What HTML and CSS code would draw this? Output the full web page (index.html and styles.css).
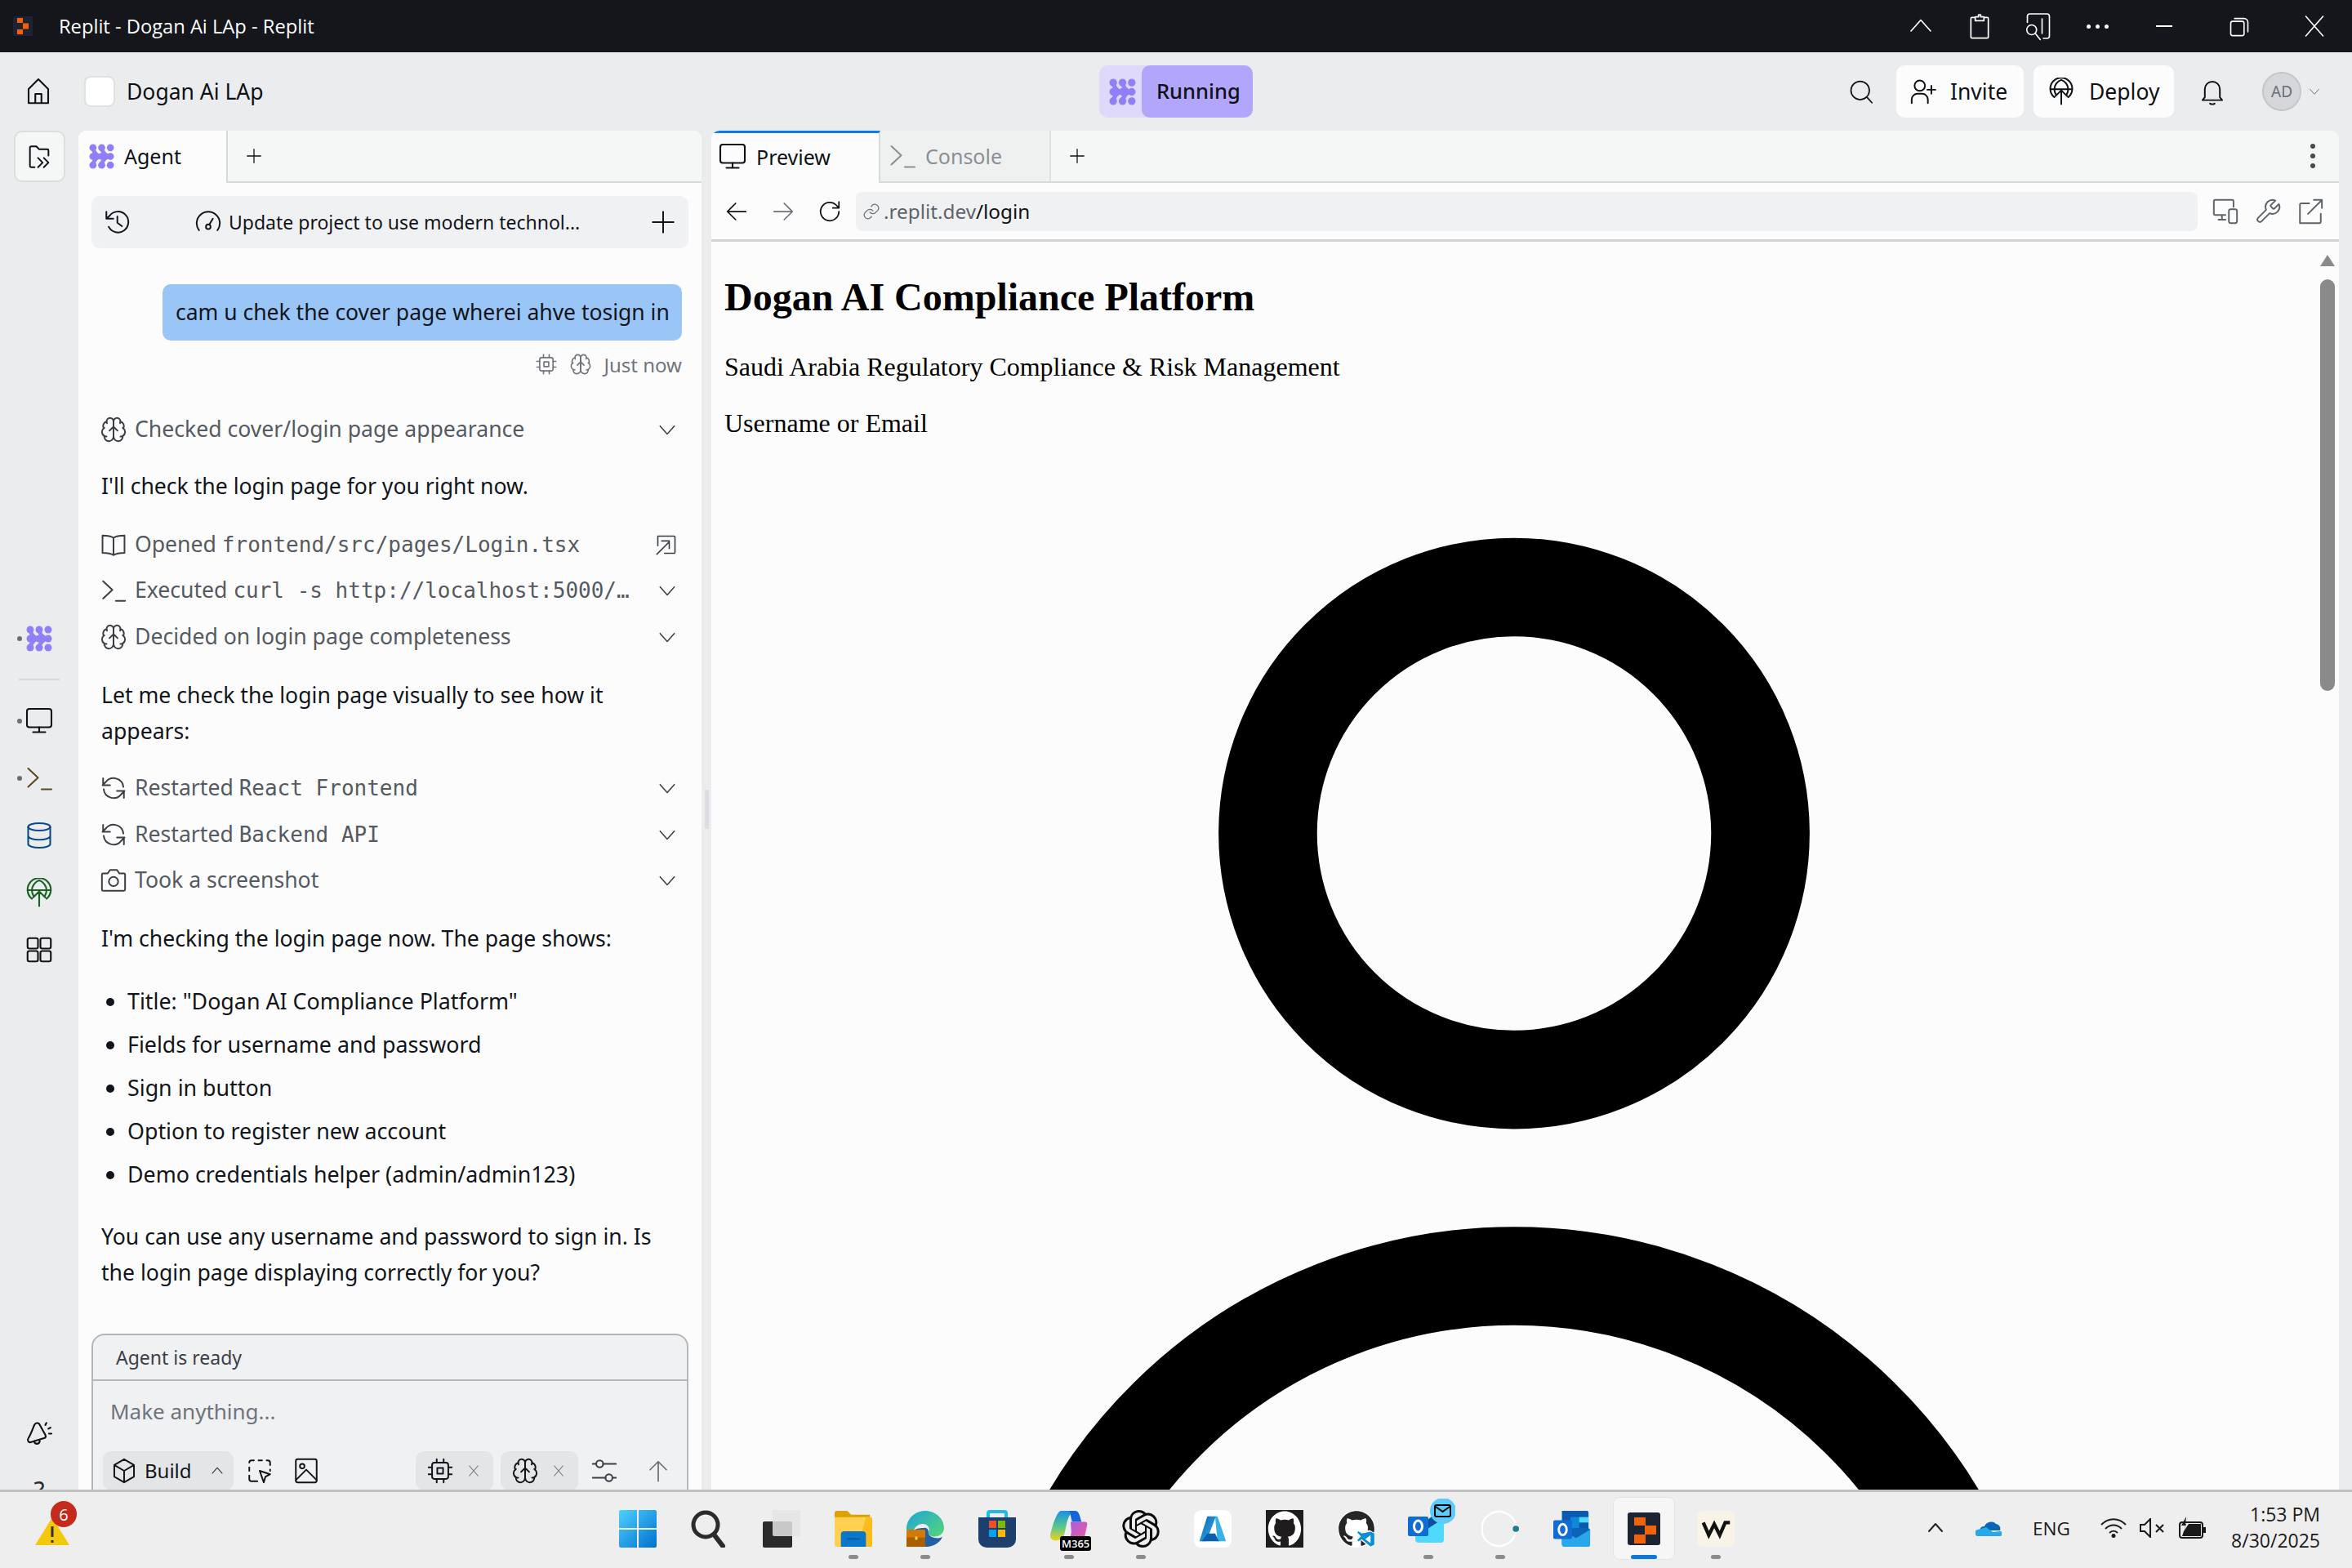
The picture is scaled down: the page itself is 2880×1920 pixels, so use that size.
FILE: index.html
```html
<!DOCTYPE html>
<html lang="en">
<head>
<meta charset="utf-8">
<title>Replit - Dogan Ai LAp - Replit</title>
<link rel="stylesheet" href="styles.css">
</head>
<body>
<svg class="sprite" aria-hidden="true">
<defs>
<linearGradient id="win" x1="0" y1="0" x2="1" y2="1"><stop offset="0" stop-color="#4fd0ff"/><stop offset="1" stop-color="#0070cc"/></linearGradient>
<linearGradient id="edge" x1="0" y1="0" x2="1" y2="1"><stop offset="0" stop-color="#1fa5d8"/><stop offset="1" stop-color="#5bdc6a"/></linearGradient>
<linearGradient id="cop" x1="0" y1="0" x2="0" y2="1"><stop offset="0" stop-color="#1a8fe8"/><stop offset=".55" stop-color="#58c98a"/><stop offset="1" stop-color="#f0d020"/></linearGradient>
<linearGradient id="cop2" x1="0" y1="0" x2="1" y2="1"><stop offset="0" stop-color="#a45be0"/><stop offset="1" stop-color="#f0609a"/></linearGradient>
<linearGradient id="az" x1="0" y1="0" x2="1" y2="1"><stop offset="0" stop-color="#0c5fb0"/><stop offset="1" stop-color="#37b4ec"/></linearGradient>
<symbol id="agent" viewBox="0 0 32 32"><g fill="#8f7ffb"><circle cx="5" cy="5" r="4.500"/><circle cx="16" cy="5" r="4.500"/><circle cx="27" cy="5" r="4.500"/><circle cx="5" cy="16" r="4.500"/><circle cx="16" cy="16" r="4.500"/><circle cx="27" cy="16" r="4.500"/><circle cx="5" cy="27" r="4.500"/><circle cx="16" cy="27" r="4.500"/><circle cx="27" cy="27" r="4.500"/></g><path fill="none" stroke="#8f7ffb" stroke-width="5" d="M5 5c1 7 6 11 11 11C11 16 6 20 5 27M16 5c1 7 6 11 11 11-5 0-10 4-11 11"/></symbol>
<symbol id="home" viewBox="0 0 24 24"><path d="M4 21.500V10l8-8 8 8v11.500zM9.500 21.500V14h5v7.500"/></symbol>
<symbol id="files" viewBox="0 0 24 24"><path d="M8 21H5a1 1 0 0 1-1-1V4a1 1 0 0 1 1-1h4.500L12 5.500h7a1 1 0 0 1 1 1V11M11 13l4 4-4 4M16 13l4 4-4 4"/></symbol>
<symbol id="plus" viewBox="0 0 24 24"><path d="M12 3v18M3 12h18"/></symbol>
<symbol id="history" viewBox="0 0 24 24"><path d="M5 16a9 9 0 1 0 .8-9.500L3 9M3 3v6h6M12.500 7v5.500l4 3"/></symbol>
<symbol id="gauge" viewBox="0 0 24 24"><path d="M4 19a10 10 0 1 1 16 0M13 14l3-5"/><circle cx="12" cy="16" r="2"/></symbol>
<symbol id="chip" viewBox="0 0 24 24"><rect x="5" y="5" width="14" height="14" rx="2"/><rect x="9.500" y="9.500" width="5" height="5"/><path d="M9 2v3M15 2v3M9 19v3M15 19v3M2 9h3M2 15h3M19 9h3M19 15h3"/></symbol>
<symbol id="brain" viewBox="0 0 24 24"><path d="M12 5a3 3 0 1 0-5.997.125 4 4 0 0 0-2.526 5.770 4 4 0 0 0 .556 6.588A4 4 0 1 0 12 18Z"/><path d="M12 5a3 3 0 1 1 5.997.125 4 4 0 0 1 2.526 5.770 4 4 0 0 1-.556 6.588A4 4 0 1 1 12 18Z"/><path d="M12 5v13M8.500 13 12 9.500l3.500 3.500M17.599 6.500a3 3 0 0 0 .399-1.375M6.003 5.125A3 3 0 0 0 6.401 6.500M3.477 10.896a4 4 0 0 1 .585-.396M19.938 10.500a4 4 0 0 1 .585.396M6 18a4 4 0 0 1-1.967-.516M19.967 17.484A4 4 0 0 1 18 18"/></symbol>
<symbol id="book" viewBox="0 0 24 24"><path d="M12 6C10 4.500 7 4 2.500 4v15C7 19 10 19.500 12 21c2-1.500 5-2 9.500-2V4C17 4 14 4.500 12 6zM12 6v15"/></symbol>
<symbol id="term" viewBox="0 0 24 24"><path d="M3 4l8 7.500L3 19M14 21h8"/></symbol>
<symbol id="down" viewBox="0 0 24 24"><path d="M4 8l8 9 8-9"/></symbol>
<symbol id="up" viewBox="0 0 24 24"><path d="M4 16l8-9 8 9"/></symbol>
<symbol id="openfile" viewBox="0 0 24 24"><path d="M3 3h17a1 1 0 0 1 1 1v16a1 1 0 0 1-1 1H10M3 3v10M2 22L15 9M7 8h8v8"/></symbol>
<symbol id="refresh" viewBox="0 0 24 24"><path d="M20.500 11a8.500 8.500 0 0 0-15-4.500L2.500 9.500M3 3.500v6h6M3.500 13a8.500 8.500 0 0 0 15 4.500l3-3M21 20.500v-6h-6"/></symbol>
<symbol id="camera" viewBox="0 0 24 24"><path d="M3 6h4l2-3h6l2 3h4a1 1 0 0 1 1 1v13a1 1 0 0 1-1 1H3a1 1 0 0 1-1-1V7a1 1 0 0 1 1-1z"/><circle cx="12" cy="13" r="4"/></symbol>
<symbol id="monitor" viewBox="0 0 24 24"><rect x="2" y="2" width="20" height="15" rx="2"/><path d="M12 17v4M7 21h10"/></symbol>
<symbol id="db" viewBox="0 0 24 24"><ellipse cx="12" cy="5" rx="9" ry="3"/><path d="M3 5v14c0 1.700 4 3 9 3s9-1.300 9-3V5M3 12.500c0 1.700 4 3 9 3s9-1.300 9-3"/></symbol>
<symbol id="deploy" viewBox="0 0 24 24"><path d="M6 17a9.500 9.500 0 1 1 12 0M2.500 10h19M7.500 15C6.500 13 6 11.500 6 10c0-3 2.500-7 6-8 3.500 1 6 5 6 8 0 1.500-.5 3-1.500 5M12 23V11M7 16l5-5 5 5"/></symbol>
<symbol id="grid" viewBox="0 0 24 24"><rect x="2.500" y="2.500" width="8.500" height="8.500" rx="1.500"/><rect x="13" y="2.500" width="8.500" height="8.500" rx="1.500"/><rect x="2.500" y="13" width="8.500" height="8.500" rx="1.500"/><rect x="13" y="13" width="8.500" height="8.500" rx="1.500"/></symbol>
<symbol id="announce" viewBox="0 0 24 24"><path d="M3 17c2-3 3-6 5-11 1-2 3-2 4-1l5 9c.5 1 .5 2-.5 2.500L5 20c-1.500.5-3-1.500-2-3zM8 19c0 3 4 3 4.500 0"/><path d="M17 6l1-2M19.500 9l2-1M20 13h2" stroke-dasharray="2 1"/></symbol>
<symbol id="bell" viewBox="0 0 24 24"><path d="M5.500 17V10a6.500 6.500 0 0 1 13 0v7l2 2.500h-17zM10 22.500c1 .7 3 .7 4 0"/></symbol>
<symbol id="search" viewBox="0 0 24 24"><circle cx="11" cy="11" r="9"/><path d="M17.500 17.500 22.500 23"/></symbol>
<symbol id="invite" viewBox="0 0 24 24"><circle cx="9" cy="7" r="4.500"/><path d="M2 22v-3a5 5 0 0 1 5-5h4a5 5 0 0 1 5 5v3M19 7v7M15.500 10.500h7"/></symbol>
<symbol id="left" viewBox="0 0 24 24"><path d="M21 12H3M11 4l-8 8 8 8"/></symbol>
<symbol id="right" viewBox="0 0 24 24"><path d="M3 12h18M13 4l8 8-8 8"/></symbol>
<symbol id="reload" viewBox="0 0 24 24"><path d="M21 12a9 9 0 1 1-2.700-6.400L21 8.500M21 2.500v6h-6"/></symbol>
<symbol id="link" viewBox="0 0 24 24"><path d="M10 13a5 5 0 0 0 7.500.5l3-3a5 5 0 0 0-7-7l-1.700 1.700M14 11a5 5 0 0 0-7.500-.5l-3 3a5 5 0 0 0 7 7l1.700-1.700"/></symbol>
<symbol id="devices" viewBox="0 0 24 24"><path d="M12 15H3a1 1 0 0 1-1-1V3a1 1 0 0 1 1-1h15a1 1 0 0 1 1 1v5M9 15v4M6 19h6"/><rect x="15" y="10" width="7" height="12" rx="1.500"/></symbol>
<symbol id="wrench" viewBox="0 0 24 24"><path d="M14.700 6.300a1 1 0 0 0 0 1.400l1.600 1.600a1 1 0 0 0 1.400 0l3.770-3.770a6 6 0 0 1-7.940 7.940l-6.910 6.910a2.120 2.120 0 0 1-3-3l6.910-6.910a6 6 0 0 1 7.940-7.940l-3.760 3.760z"/></symbol>
<symbol id="extern" viewBox="0 0 24 24"><path d="M11 5H4a1 1 0 0 0-1 1v16h17a1 1 0 0 0 1-1v-7M15 2h7v7M22 2 10 14"/></symbol>
<symbol id="cube" viewBox="0 0 24 24"><path d="M12 2l8.500 5v10L12 22l-8.500-5V7zM3.500 7l8.500 5 8.500-5M12 12v10"/></symbol>
<symbol id="select" viewBox="0 0 24 24"><path d="M10 21H5a2 2 0 0 1-2-2v-3M3 12V9M3 5a2 2 0 0 1 2-2h2M11 3h3M18 3h1a2 2 0 0 1 2 2v2M21 11v1"/><path d="M12 12l9 3-4 2-1.500 5z"/></symbol>
<symbol id="image" viewBox="0 0 24 24"><rect x="3" y="2" width="18" height="20" rx="1.500"/><circle cx="8.500" cy="8" r="2"/><path d="M3 20l9-9 9 9"/></symbol>
<symbol id="sliders" viewBox="0 0 24 24"><circle cx="8" cy="6" r="3"/><circle cx="16" cy="18" r="3"/><path d="M11 6h11M2 18h11M19 18h3M2 6h3"/></symbol>
<symbol id="arrowup" viewBox="0 0 24 24"><path d="M12 22V3M4 11l8-8 8 8"/></symbol>
<symbol id="x" viewBox="0 0 24 24"><path d="M5 4l14 16M19 4 5 20"/></symbol>
<symbol id="clip" viewBox="0 0 24 24"><path d="M8 4H5a1 1 0 0 0-1 1v17a1 1 0 0 0 1 1h14a1 1 0 0 0 1-1V5a1 1 0 0 0-1-1h-3M8 7V3.500h3V1.500h2v2h3V7z"/></symbol>
<symbol id="snip" viewBox="0 0 24 24"><path d="M3 9V4a2 2 0 0 1 2-2h14a2 2 0 0 1 2 2v16a2 2 0 0 1-2 2h-3M15 6v12"/><circle cx="6.500" cy="15" r="4"/><path d="M9.500 18l4 5"/></symbol>
<symbol id="restore" viewBox="0 0 24 24"><rect x="3" y="7" width="14" height="15" rx="2"/><path d="M7 4h10a4 4 0 0 1 4 4v10"/></symbol>
</defs>
</svg>

<header class="titlebar">
  <svg class="replit-mini" viewBox="0 0 24 24"><rect width="24" height="24" rx="2" fill="#1c2333"/><path fill="#f26207" d="M5 2h7v6H5zM12 8.500h7v7h-7zM5 16h7v6H5z"/></svg>
  <span class="wintitle">Replit - Dogan Ai LAp - Replit</span>
  <div class="capgroup">
    <span class="capslot"><svg class="ic ic-cap-l"><use href="#up"/></svg></span>
    <span class="capslot"><svg class="ic ic-cap-m"><use href="#clip"/></svg></span>
    <span class="capslot"><svg class="ic ic-cap-l"><use href="#snip"/></svg></span>
    <span class="capslot capdots"><span></span><span></span><span></span></span>
    <span class="capbtn"><span class="minbar"></span></span>
    <span class="capbtn"><svg class="ic ic-cap-r"><use href="#restore"/></svg></span>
    <span class="capbtn"><svg class="ic ic-cap-l"><use href="#x"/></svg></span>
  </div>
</header>

<div class="topbar">
  <div class="top-left">
    <svg class="ic ic-home"><use href="#home"/></svg>
    <span class="project-tile"></span>
    <span class="project-name">Dogan Ai LAp</span>
  </div>
  <div class="running">
    <span class="running-logo"><svg class="logo-md"><use href="#agent"/></svg></span>
    <span class="running-text">Running</span>
  </div>
  <div class="top-right">
    <svg class="ic ic-search"><use href="#search"/></svg>
    <button class="topbtn topbtn-invite"><svg class="ic ic-md"><use href="#invite"/></svg>Invite</button>
    <button class="topbtn topbtn-deploy"><svg class="ic ic-md"><use href="#deploy"/></svg>Deploy</button>
    <svg class="ic ic-bell"><use href="#bell"/></svg>
    <span class="avatar">AD</span>
    <svg class="ic ic-avchev"><use href="#down"/></svg>
  </div>
</div>

<main class="workspace">
  <nav class="rail">
    <span class="rail-file"><svg class="ic ic-md"><use href="#files"/></svg></span>
    <div class="rail-mid">
      <span class="rail-item has-dot"><svg class="logo-lg"><use href="#agent"/></svg></span>
      <span class="rail-sep"></span>
      <span class="rail-item has-dot"><svg class="ic ic-rail"><use href="#monitor"/></svg></span>
      <span class="rail-item has-dot c-term"><svg class="ic ic-rail"><use href="#term"/></svg></span>
      <span class="rail-item c-db"><svg class="ic ic-rail"><use href="#db"/></svg></span>
      <span class="rail-item c-deploy"><svg class="ic ic-rail"><use href="#deploy"/></svg></span>
      <span class="rail-item"><svg class="ic ic-rail"><use href="#grid"/></svg></span>
    </div>
    <div class="rail-bottom">
      <svg class="ic ic-rail"><use href="#announce"/></svg>
      <span class="rail-help">?</span>
    </div>
  </nav>

  <section class="agent-pane">
    <div class="tabs">
      <div class="tab tab-agent"><svg class="logo-sm"><use href="#agent"/></svg><span>Agent</span></div>
      <span class="tab-plus tab-plus-a"><svg class="ic ic-sm"><use href="#plus"/></svg></span>
    </div>
    <div class="chat">
      <div class="session">
        <svg class="ic ic-md"><use href="#history"/></svg>
        <div class="session-title"><svg class="ic ic-md"><use href="#gauge"/></svg><span>Update project to use modern technol...</span></div>
        <svg class="ic ic-md"><use href="#plus"/></svg>
      </div>
      <div class="bubble">cam u chek the cover page wherei ahve tosign in</div>
      <div class="meta"><svg class="ic ic-meta"><use href="#chip"/></svg><svg class="ic ic-meta"><use href="#brain"/></svg><span>Just now</span></div>

      <div class="step step-first"><svg class="ic ic-step"><use href="#brain"/></svg><span class="step-text">Checked cover/login page appearance</span><svg class="ic ic-chev"><use href="#down"/></svg></div>
      <p class="msg msg-1">I'll check the login page for you right now.</p>
      <div class="step step-gap step-gap-a"><svg class="ic ic-step"><use href="#book"/></svg><span class="step-text">Opened <code>frontend/src/pages/Login.tsx</code></span><svg class="ic ic-open"><use href="#openfile"/></svg></div>
      <div class="step"><svg class="ic ic-step"><use href="#term"/></svg><span class="step-text">Executed <code>curl -s http://localhost:5000/…</code></span><svg class="ic ic-chev"><use href="#down"/></svg></div>
      <div class="step"><svg class="ic ic-step"><use href="#brain"/></svg><span class="step-text">Decided on login page completeness</span><svg class="ic ic-chev"><use href="#down"/></svg></div>
      <p class="msg msg-2">Let me check the login page visually to see how it appears:</p>
      <div class="step step-gap"><svg class="ic ic-step"><use href="#refresh"/></svg><span class="step-text">Restarted <code>React Frontend</code></span><svg class="ic ic-chev"><use href="#down"/></svg></div>
      <div class="step"><svg class="ic ic-step"><use href="#refresh"/></svg><span class="step-text">Restarted <code>Backend API</code></span><svg class="ic ic-chev"><use href="#down"/></svg></div>
      <div class="step"><svg class="ic ic-step"><use href="#camera"/></svg><span class="step-text">Took a screenshot</span><svg class="ic ic-chev"><use href="#down"/></svg></div>
      <p class="msg msg-3">I'm checking the login page now. The page shows:</p>
      <ul class="bullets">
        <li>Title: "Dogan AI Compliance Platform"</li>
        <li>Fields for username and password</li>
        <li>Sign in button</li>
        <li>Option to register new account</li>
        <li>Demo credentials helper (admin/admin123)</li>
      </ul>
      <p class="msg msg-4">You can use any username and password to sign in. Is the login page displaying correctly for you?</p>

      <div class="composer">
        <div class="composer-status">Agent is ready</div>
        <div class="composer-input">Make anything...</div>
        <div class="composer-tools">
          <span class="pill pill-build"><svg class="ic ic-md"><use href="#cube"/></svg><span>Build</span><svg class="ic ic-xs"><use href="#up"/></svg></span>
          <svg class="ic ic-tool ic-select"><use href="#select"/></svg>
          <svg class="ic ic-tool ic-image"><use href="#image"/></svg>
          <span class="tools-spacer"></span>
          <span class="pill pill-chip"><svg class="ic ic-md"><use href="#chip"/></svg><svg class="ic ic-xg"><use href="#x"/></svg></span>
          <span class="pill pill-chip"><svg class="ic ic-md"><use href="#brain"/></svg><svg class="ic ic-xg"><use href="#x"/></svg></span>
          <svg class="ic ic-tool ic-sl"><use href="#sliders"/></svg>
          <svg class="ic ic-tool ic-send"><use href="#arrowup"/></svg>
        </div>
      </div>
    </div>
  </section>

  <div class="resizer"><span class="resizer-grip"></span></div>

  <section class="preview-pane">
    <div class="tabs">
      <div class="tab tab-preview"><svg class="ic ic-tab"><use href="#monitor"/></svg><span>Preview</span></div>
      <div class="tab tab-console"><svg class="ic ic-tab"><use href="#term"/></svg><span>Console</span></div>
      <span class="tab-plus"><svg class="ic ic-sm"><use href="#plus"/></svg></span>
      <span class="tab-menu"><span></span><span></span><span></span></span>
    </div>
    <div class="urlbar">
      <svg class="ic ic-nav"><use href="#left"/></svg>
      <svg class="ic ic-nav ic-faint"><use href="#right"/></svg>
      <svg class="ic ic-nav"><use href="#reload"/></svg>
      <div class="urlfield"><svg class="ic ic-link"><use href="#link"/></svg><span class="url-host">.replit.dev</span><span class="url-path">/login</span></div>
      <svg class="ic ic-tb"><use href="#devices"/></svg>
      <svg class="ic ic-tb"><use href="#wrench"/></svg>
      <svg class="ic ic-tb"><use href="#extern"/></svg>
    </div>
    <div class="webview">
      <h1 class="web-h1">Dogan AI Compliance Platform</h1>
      <p class="web-p">Saudi Arabia Regulatory Compliance &amp; Risk Management</p>
      <p class="web-p web-label">Username or Email</p>
      <svg class="web-user" viewBox="0 0 24 24"><path d="M15.750 6a3.750 3.750 0 1 1-7.500 0 3.750 3.750 0 0 1 7.500 0ZM4.501 20.118a7.500 7.500 0 0 1 14.998 0A17.933 17.933 0 0 1 12 21.750c-2.676 0-5.216-.584-7.499-1.632Z"/></svg>
      <div class="web-scroll"><span class="web-scroll-up"></span><span class="web-scroll-thumb"></span></div>
    </div>
  </section>
</main>

<footer class="taskbar">
  <div class="tb-left">
    <span class="warn">
      <svg class="warn-tri" viewBox="0 0 42 36"><path fill="#f4c80c" d="M21 1 42 35H0z"/><path d="M21 12v13M21 29v3" stroke="#333" stroke-width="3"/></svg>
      <span class="warn-badge">6</span>
    </span>
  </div>
  <div class="tb-apps">
    <span class="app"><svg class="app-i" viewBox="0 0 46 46"><path fill="url(#win)" d="M0 2a2 2 0 0 1 2-2h20v22H0zM24 0h20a2 2 0 0 1 2 2v20H24zM0 24h22v22H2a2 2 0 0 1-2-2zM24 24h22v20a2 2 0 0 1-2 2H24z"/></svg></span>
    <span class="app"><svg class="app-i" viewBox="0 0 46 46"><circle cx="18" cy="18" r="15" fill="none" stroke="#2b2b2b" stroke-width="5"/><path d="M29 31l10 13" stroke="#2b2b2b" stroke-width="6" stroke-linecap="round"/></svg></span>
    <span class="app"><svg class="app-i" viewBox="0 0 46 46"><rect x="0" y="14" width="36" height="32" rx="2" fill="#2a2a2a"/><rect x="12" y="0" width="35" height="32" rx="2" fill="#e4e4e4" fill-opacity=".85"/></svg></span>
    <span class="app has-run"><svg class="app-i" viewBox="0 0 48 46"><path fill="#dba200" d="M0 3a3 3 0 0 1 3-3h13l5 5h24v10H0z"/><path fill="#ffd052" d="M0 8h45a3 3 0 0 1 3 3v32a3 3 0 0 1-3 3H3a3 3 0 0 1-3-3z"/><path fill="#fbbd1a" d="M40 8h5a3 3 0 0 1 3 3v32a3 3 0 0 1-3 3H30z"/><path fill="#0a78c9" d="M8 46V30a4 4 0 0 1 4-4h24a4 4 0 0 1 4 4v16z"/><path d="M16 36h16" stroke="#075a9a" stroke-width="2"/></svg></span>
    <span class="app has-run"><svg class="app-i" viewBox="0 0 48 46"><path fill="url(#edge)" d="M24 0c13 0 24 10 24 22 0 6-5 11-12 11-6 0-8-3-8-5 0-1 1-2 1-4 0-5-5-8-10-7-7 1-11 7-11 14C8 33 10 39 12 42 5 38 0 31 0 23 0 10 11 0 24 0z"/><path fill="#0b4f9e" d="M22 22c4-1 6 2 6 4-1 7 6 9 12 9 3 0 5-1 6-2-3 8-12 13-20 13H0c-1-7 0-24 22-24z" opacity=".9"/><rect x="0" y="24" width="24" height="22" rx="2" fill="#d17a05"/><rect x="0" y="34" width="24" height="12" fill="#a85f00"/><rect x="11" y="33" width="3" height="4" fill="#ffd44d"/></svg></span>
    <span class="app"><svg class="app-i" viewBox="0 0 46 46"><path d="M12 10V4a2 2 0 0 1 2-2h18a2 2 0 0 1 2 2v6" fill="none" stroke="#22b8ee" stroke-width="4"/><path fill="#1c3f6e" d="M0 9h46v27a10 10 0 0 1-10 10H10A10 10 0 0 1 0 36z"/><path fill="#f25022" d="M13 13h9v9h-9z"/><path fill="#7fba00" d="M24 13h9v9h-9z"/><path fill="#00a4ef" d="M13 24h9v9h-9z"/><path fill="#ffb900" d="M24 24h9v9h-9z"/></svg></span>
    <span class="app has-run"><svg class="app-i" viewBox="0 0 48 46"><path fill="url(#cop)" d="M14 0h18c-6 2-9 8-11 16l-3 14c-2 5-5 8-11 8-5 0-7-3-7-7C2 22 8 0 14 0z"/><path fill="#1565d8" d="M24 0h8c5 0 6 8 8 14H28c-2-6-2-12-4-14z"/><path fill="url(#cop2)" d="M26 14h18c3 0 4 2 3 5l-3 14c-2 6-8 8-14 8h-10c5-2 6-8 7-14z"/></svg><span class="m365">M365</span></span>
    <span class="app has-run"><svg class="app-i" viewBox="0 0 24 24"><path fill="#0a0a0a" d="M22.2819 9.8211a5.9847 5.9847 0 0 0-.5157-4.9108 6.0462 6.0462 0 0 0-6.5098-2.9A6.0651 6.0651 0 0 0 4.9807 4.1818a5.9847 5.9847 0 0 0-3.9977 2.9 6.0462 6.0462 0 0 0 .7427 7.0966 5.98 5.98 0 0 0 .511 4.9107 6.051 6.051 0 0 0 6.5146 2.9001A5.9847 5.9847 0 0 0 13.2599 24a6.0557 6.0557 0 0 0 5.7718-4.2058 5.9894 5.9894 0 0 0 3.9977-2.9001 6.0557 6.0557 0 0 0-.7475-7.0729zm-9.022 12.6081a4.4755 4.4755 0 0 1-2.8764-1.0408l.1419-.0804 4.7783-2.7582a.7948.7948 0 0 0 .3927-.6813v-6.7369l2.02 1.1686a.071.071 0 0 1 .038.052v5.5826a4.504 4.504 0 0 1-4.4945 4.4944zm-9.6607-4.1254a4.4708 4.4708 0 0 1-.5346-3.0137l.142.0852 4.783 2.7582a.7712.7712 0 0 0 .7806 0l5.8428-3.3685v2.3324a.0804.0804 0 0 1-.0332.0615L9.74 19.9502a4.4992 4.4992 0 0 1-6.1408-1.6464zM2.3408 7.8956a4.485 4.485 0 0 1 2.3655-1.9728V11.6a.7664.7664 0 0 0 .3879.6765l5.8144 3.3543-2.0201 1.1685a.0757.0757 0 0 1-.071 0l-4.8303-2.7865A4.504 4.504 0 0 1 2.3408 7.872zm16.5963 3.8558L13.1038 8.364 15.1192 7.2a.0757.0757 0 0 1 .071 0l4.8303 2.7913a4.4944 4.4944 0 0 1-.6765 8.1042v-5.6772a.79.79 0 0 0-.407-.667zm2.0107-3.0231l-.142-.0852-4.7735-2.7818a.7759.7759 0 0 0-.7854 0L9.409 9.2297V6.8974a.0662.0662 0 0 1 .0284-.0615l4.8303-2.7866a4.4992 4.4992 0 0 1 6.6802 4.66zM8.3065 12.863l-2.02-1.1638a.0804.0804 0 0 1-.038-.0567V6.0742a4.4992 4.4992 0 0 1 7.3757-3.4537l-.142.0805L8.704 5.459a.7948.7948 0 0 0-.3927.6813zm1.0976-2.3654l2.602-1.4998 2.6069 1.4998v2.9994l-2.5974 1.4997-2.6067-1.4997Z"/></svg></span>
    <span class="app"><svg class="app-i" viewBox="0 0 48 48"><rect width="48" height="48" rx="9" fill="#fff"/><path fill="url(#az)" d="M17 8h11L16 40H7z"/><path fill="#39b0ea" d="M27 8h3l11 32H30z"/><path fill="#0a5fb0" d="M17 30h10l5 10H10z"/></svg></span>
    <span class="app"><svg class="app-i" viewBox="0 0 16 16"><rect width="16" height="16" fill="#1e1c1c"/><path transform="translate(1 .5) scale(.875 .94)" fill="#fff" d="M8 0C3.580 0 0 3.580 0 8c0 3.540 2.290 6.530 5.470 7.590.4.070.55-.17.55-.38 0-.19-.01-.82-.01-1.490-2.010.37-2.530-.49-2.690-.94-.09-.23-.48-.94-.82-1.130-.28-.15-.68-.52-.01-.53.63-.01 1.080.58 1.230.82.72 1.210 1.870.87 2.330.66.07-.52.28-.87.51-1.070-1.780-.2-3.640-.89-3.640-3.950 0-.87.31-1.590.82-2.150-.08-.2-.36-1.020.08-2.120 0 0 .67-.21 2.200.82.64-.18 1.320-.27 2-.27.68 0 1.360.09 2 .27 1.530-1.040 2.200-.82 2.200-.82.44 1.100.16 1.920.08 2.120.51.56.82 1.270.82 2.150 0 3.070-1.870 3.750-3.650 3.950.29.25.54.73.54 1.480 0 1.070-.01 1.930-.01 2.200 0 .21.15.46.55.38A8.013 8.013 0 0016 8c0-4.420-3.580-8-8-8z"/></svg></span>
    <span class="app"><svg class="app-i" viewBox="0 0 16 16"><circle cx="8" cy="8" r="8" fill="#fff"/><path transform="translate(.4 .4) scale(.95)" fill="#262626" d="M8 0C3.580 0 0 3.580 0 8c0 3.540 2.290 6.530 5.470 7.590.4.070.55-.17.55-.38 0-.19-.01-.82-.01-1.490-2.010.37-2.530-.49-2.690-.94-.09-.23-.48-.94-.82-1.130-.28-.15-.68-.52-.01-.53.63-.01 1.080.58 1.230.82.72 1.210 1.870.87 2.330.66.07-.52.28-.87.51-1.070-1.780-.2-3.640-.89-3.640-3.950 0-.87.31-1.590.82-2.150-.08-.2-.36-1.020.08-2.120 0 0 .67-.21 2.200.82.64-.18 1.320-.27 2-.27.68 0 1.360.09 2 .27 1.530-1.040 2.200-.82 2.200-.82.44 1.100.16 1.920.08 2.120.51.56.82 1.270.82 2.150 0 3.070-1.870 3.750-3.650 3.950.29.25.54.73.54 1.480 0 1.070-.01 1.930-.01 2.200 0 .21.15.46.55.38A8.013 8.013 0 0016 8c0-4.420-3.580-8-8-8z"/><path fill="#fff" d="M13.800 8.600 16 10v5l-2.200 1-4.300-3.500-1.200 1-1-.8 1.800-2-1.800-2 1-.8 1.200 1z"/><path fill="#0d8fd8" d="M14 9.200 15.600 10v4.800L14 15.600l-3.800-3.200-1.300 1-.6-.5 1.600-1.700-1.600-1.700.6-.5 1.300 1zM14 10.700l-2.300 1.700 2.300 1.700z"/></svg></span>
    <span class="app has-run"><svg class="app-out" viewBox="0 0 58 62"><path fill="#50d9ff" d="M9 38 38 14h6v36a4 4 0 0 1-4 4H13a4 4 0 0 1-4-4z"/><path fill="#0a4fa3" d="M9 38 32 20l9 6-20 13z"/><rect x="0" y="22" width="25" height="24" rx="2" fill="#0f6cd4"/><ellipse cx="12.500" cy="34" rx="5" ry="7" fill="none" stroke="#fff" stroke-width="3"/><ellipse cx="43" cy="15" rx="16" ry="16" fill="#5ecbff"/><rect x="33" y="8" width="19" height="14" rx="2" fill="none" stroke="#0a0a0a" stroke-width="2"/><path d="M34 10l8.500 6 8.500-6" fill="none" stroke="#0a0a0a" stroke-width="2"/></svg></span>
    <span class="app has-run"><svg class="app-i" viewBox="0 0 48 46"><path d="M44 19a22 22 0 1 0 0 8" fill="none" stroke="#fff" stroke-width="2.500"/><circle cx="44" cy="23" r="4" fill="#1f7c97"/></svg></span>
    <span class="app"><svg class="app-i" viewBox="0 0 48 46"><path fill="#0a5bb0" d="M11 0h32a2 2 0 0 1 2 2v20H11z"/><path fill="#1088d8" d="M22 8h11v14H22z"/><path fill="#50d9ff" d="M33 8h12v7H33z"/><path fill="#0c64b8" d="M22 22h23L47 24v18a3 3 0 0 1-3 3H14a3 3 0 0 1-3-3V30z"/><path fill="#28a8ea" d="M11 24l18 11 18-11v19a3 3 0 0 1-3 3H14a3 3 0 0 1-3-3z"/><rect x="0" y="12" width="24" height="24" rx="2" fill="#0f6cd4"/><ellipse cx="12" cy="24" rx="5" ry="7" fill="none" stroke="#fff" stroke-width="3"/></svg></span>
    <span class="app app-active"><svg class="app-r" viewBox="0 0 40 40"><rect width="40" height="40" rx="3" fill="#1c2333"/><path fill="#f26207" d="M8 6h14v10H8zM21 16h14v11H21zM8 27h14v11H8z"/></svg><span class="act-line"></span></span>
    <span class="app has-run"><svg class="app-i" viewBox="0 0 48 46"><rect width="48" height="46" rx="6" fill="#f8f3e6"/><path d="M8 15l7 16 7-14 7 14 7-16h6" fill="none" stroke="#111" stroke-width="4.500"/></svg></span>
  </div>
  <div class="tray">
    <svg class="ic tray-up"><use href="#up"/></svg>
    <svg class="tray-cloud" viewBox="0 0 32 20"><path fill="#0a64b8" d="M5 13a6 6 0 0 1 6-5 8.500 8.500 0 0 1 14-3 6 6 0 0 1 5 8z"/><path fill="#28a8ea" d="M4 20a4 4 0 0 1-1-8l10-3 8 6 9-1a3 3 0 0 1-1 6z"/></svg>
    <span class="tray-lang">ENG</span>
    <svg class="tray-ico tray-wifi" viewBox="0 0 32 24"><path d="M1 8c9-9 21-9 30 0M6 13c6-6 14-6 20 0M11 18c3-3 7-3 10 0" fill="none" stroke="#1a1a1a" stroke-width="2"/><circle cx="16" cy="21.500" r="2.500" fill="#1a1a1a"/></svg>
    <svg class="tray-ico tray-spk" viewBox="0 0 32 24"><path d="M1 8h5l7-7v22l-7-7H1z M20 8l9 9M29 8l-9 9" fill="none" stroke="#1a1a1a" stroke-width="2"/></svg>
    <svg class="tray-ico tray-bat" viewBox="0 0 34 28"><rect x="1" y="7" width="28" height="19" rx="3" fill="none" stroke="#1a1a1a" stroke-width="2"/><path fill="#1a1a1a" d="M9 9h18v15H4zM30 13h3v7h-3zM9 0 3 11h5l-2 7 6-9H8z"/></svg>
    <div class="clock"><span>1:53 PM</span><span>8/30/2025</span></div>
  </div>
</footer>
</body>
</html>
```

FILE: styles.css
```css
* { box-sizing: border-box; }
html, body { margin: 0; padding: 0; width: 2880px; height: 1920px; overflow: hidden; }
body { font-family: "Noto Sans", sans-serif; color: #0e1116; background: #ebecee; display: flex; flex-direction: column; }
.sprite { position: absolute; width: 0; height: 0; }
.ic { fill: none; stroke: currentColor; stroke-width: 1.4; stroke-linecap: round; stroke-linejoin: round; display: block; flex: none; }
button { font: inherit; color: inherit; border: 0; }

.titlebar { height: 64px; flex: none; background: #14161b; display: flex; align-items: center; color: #fff; padding-left: 16px; }
.replit-mini { width: 24px; height: 24px; flex: none; }
.wintitle { margin-left: 32px; font: 23.700px "Open Sans", sans-serif; }
.capgroup { margin-left: auto; display: flex; align-items: center; height: 64px; }
.capslot { width: 72px; height: 64px; display: flex; align-items: center; justify-content: center; }
.capbtn { width: 92px; height: 64px; display: flex; align-items: center; justify-content: center; }
.ic-cap-l { width: 36px; height: 36px; stroke-width: 1.1; }
.ic-cap-m { width: 32px; height: 32px; stroke-width: 1.3; }
.ic-cap-r { width: 28px; height: 28px; stroke-width: 1.4; }
.capdots { gap: 6px; }
.capdots span { width: 5px; height: 5px; border-radius: 50%; background: #fff; }
.minbar { width: 20px; height: 2px; background: #fff; }

.topbar { height: 96px; flex: none; display: grid; grid-template-columns: 1fr auto 1fr; align-items: center; background: #ebecee; }
.top-left { display: flex; align-items: center; padding-left: 29px; }
.ic-home { width: 36px; height: 36px; }
.project-tile { width: 38px; height: 38px; margin-left: 38px; border-radius: 8px; background: #fff; border: 2px solid #dfe1e3; }
.project-name { margin-left: 14px; font-size: 26.500px; }
.running { display: flex; height: 64px; width: 188px; background: #dfd9fb; border-radius: 10px; }
.running-logo { width: 52px; display: flex; align-items: center; padding-left: 12px; }
.logo-md { width: 33px; height: 33px; }
.running-text { flex: 1; background: #b1a6fb; border-radius: 10px; display: flex; align-items: center; padding: 0 0 2px 18px; font-size: 25.500px; font-weight: 500; }
.top-right { display: flex; align-items: center; justify-content: flex-end; padding-right: 38px; }
.ic-search { width: 30px; height: 30px; margin-right: 28px; }
.topbtn { height: 64px; display: flex; align-items: center; background: #fcfcfc; border-radius: 10px; font-size: 26.500px; padding-bottom: 2px; }
.topbtn-invite { width: 156px; padding-left: 16px; gap: 16px; }
.topbtn-deploy { width: 172px; margin-left: 12px; padding-left: 17px; gap: 17px; }
.ic-md { width: 34px; height: 34px; }
.ic-bell { width: 34px; height: 34px; margin-left: 30px; }
.avatar { width: 48px; height: 48px; margin-left: 44px; border-radius: 50%; background: #d5d7da; border: 2px solid #c4c6c9; color: #696e75; font-size: 19px; display: flex; align-items: center; justify-content: center; }
.ic-avchev { width: 16px; height: 16px; margin-left: 8px; color: #6b7078; }

.workspace { height: 1664px; flex: none; display: flex; overflow: hidden; }
.rail { width: 96px; flex: none; display: flex; flex-direction: column; align-items: center; }
.rail-file { width: 63px; height: 63px; border-radius: 10px; border: 2px solid #dcdee0; background: #f5f7f6; display: flex; align-items: center; justify-content: center; }
.rail-mid { margin-top: 528px; display: flex; flex-direction: column; align-items: center; }
.rail-item { position: relative; height: 70px; width: 96px; display: flex; align-items: center; justify-content: center; }
.rail-mid .rail-item:first-child { height: 62px; }
.has-dot::before { content: ""; position: absolute; left: 21px; top: 50%; width: 6px; height: 6px; margin-top: -3px; border-radius: 50%; background: #6b6f76; }
.logo-lg { width: 32px; height: 32px; }
.rail-sep { width: 50px; height: 2px; background: #d5d7da; margin: 18px 0 15px; }
.ic-rail { width: 36px; height: 36px; }
.c-term { color: #5c4a1c; }
.c-db { color: #0a4a8c; }
.c-deploy { color: #1a6020; }
.rail-bottom { margin-top: auto; height: 88px; display: flex; flex-direction: column; align-items: center; gap: 38px; }
.rail-help { font-size: 30px; line-height: 30px; color: #2a2d33; }

.agent-pane { width: 763px; flex: none; background: #fcfcfc; border-radius: 10px 10px 0 0; display: flex; flex-direction: column; overflow: hidden; }
.tabs { height: 64px; flex: none; display: flex; align-items: stretch; background: #f5f7f6; border-bottom: 2px solid #d7d9da; }
.tab { display: flex; align-items: center; font-size: 25px; padding-bottom: 2px; }
.tab-agent { width: 183px; margin-bottom: -2px; background: #fcfcfc; border-right: 2px solid #d7d9da; padding-left: 13px; gap: 12px; }
.logo-sm { width: 31px; height: 31px; }
.tab-plus { width: 64px; display: flex; align-items: center; justify-content: center; }
.ic-sm { width: 22px; height: 22px; }
.chat { flex: 1; padding: 16px 16px 0; min-height: 0; font-size: 26.600px; color: #11151b; }
.session { height: 64px; border-radius: 10px; background: #f0f1f3; display: flex; align-items: center; padding: 0 14px; }
.session-title { flex: 1; display: flex; align-items: center; gap: 8px; padding-left: 78px; font-size: 23px; }
.bubble { width: 636px; height: 69px; margin: 44px 8px 0 auto; padding: 0 0 2px 16px; display: flex; align-items: center; background: #99c5f7; border-radius: 10px; font-size: 26.500px; }
.meta { height: 30px; margin: 15px 8px 0 0; padding-bottom: 2px; display: flex; justify-content: flex-end; align-items: center; gap: 14px; color: #70757c; font-size: 24px; }
.ic-meta { width: 28px; height: 28px; }
.step { height: 56.500px; margin: 0 13px 0 10px; display: flex; align-items: center; color: #555a62; font-size: 26.600px; white-space: nowrap; }
.step-first { margin-top: 36px; }
.step-gap { margin-top: 20px; }
.step-gap-a { margin-top: 22px; }
.ic-step { width: 34px; height: 34px; color: #3a3f46; }
.step-text { margin-left: 9px; flex: 1; padding-bottom: 2px; }
.step-text code { font-family: "DejaVu Sans Mono", monospace; font-size: 26px; }
.ic-chev { width: 26px; height: 26px; color: #3a3f46; }
.ic-open { width: 28px; height: 28px; color: #3a3f46; }
.msg { margin: 0 12px; line-height: 44px; }
.msg-1 { margin-top: 18px; }
.msg-2 { margin-top: 21px; }
.msg-3 { margin-top: 20px; }
.msg-4 { margin-top: 32px; }
.bullets { margin: 33px 12px 0; padding: 0 0 0 32px; list-style: disc; font-size: 26.800px; }
.bullets li { line-height: 44px; margin-bottom: 9px; }
.bullets li:last-child { margin-bottom: 0; }
.composer { margin-top: 53px; height: 260px; background: #f0f1f3; border: 2px solid #b5b7ba; border-radius: 16px 16px 0 0; }
.composer-status { height: 56px; padding-left: 28px; display: flex; align-items: center; border-bottom: 2px solid #b5b7ba; font-size: 23px; color: #3c4047; }
.composer-input { height: 80px; padding: 0 0 5px 21px; display: flex; align-items: center; font-size: 26px; color: #6f747b; }
.composer-tools { display: flex; align-items: flex-start; padding: 6px 0 0 12px; }
.pill { height: 48px; border-radius: 10px; background: #e4e5e7; display: flex; align-items: center; }
.pill-build { width: 160px; padding-left: 9px; gap: 8px; font-size: 24px; }
.ic-xs { width: 18px; height: 18px; margin-left: 14px; }
.ic-tool { width: 34px; height: 34px; margin-top: 7px; }
.ic-select { margin-left: 15px; }
.ic-image { margin-left: 23px; }
.tools-spacer { flex: 1; }
.pill-chip { width: 95px; padding-left: 13px; gap: 15px; margin-left: 9px; }
.ic-xg { width: 18px; height: 18px; color: #6b7078; }
.ic-tool.ic-sl { margin-left: 15px; color: #3a3f46; }
.ic-tool.ic-send { margin-left: 34px; margin-right: 20px; color: #6b7078; width: 30px; }

.resizer { width: 12px; flex: none; display: flex; align-items: center; justify-content: center; }
.resizer-grip { width: 5px; height: 48px; border-radius: 3px; background: #dcdde0; margin-top: -3px; }

.preview-pane { width: 1993px; flex: none; background: #fcfcfc; border-radius: 10px 10px 0 0; display: flex; flex-direction: column; overflow: hidden; }
.tab-preview { width: 207px; margin-bottom: -2px; padding: 0 0 4px 8px; gap: 11px; background: #fcfcfc; border-top: 3px solid #0f7ae5; border-right: 2px solid #d7d9da; }
.tab-console { width: 209px; padding: 0 0 0 9px; gap: 10px; background: #eff1f0; color: #8b8f95; border-right: 2px solid #dfe1e2; }
.ic-tab { width: 36px; height: 36px; }
.tab-menu { margin-left: auto; width: 64px; display: flex; flex-direction: column; align-items: center; justify-content: center; gap: 6px; }
.tab-menu span { width: 6px; height: 6px; border-radius: 50%; background: #45494f; }
.urlbar { height: 72px; flex: none; display: flex; align-items: center; padding-left: 16px; border-bottom: 3px solid #d2d3d5; }
.ic-nav { width: 30px; height: 30px; margin-right: 27px; }
.ic-faint { color: #6b7078; }
.urlfield { width: 1650px; height: 48px; margin-left: -10px; margin-right: 17px; border-radius: 8px; background: #f0f1f3; display: flex; align-items: center; padding-left: 8px; font-size: 24.300px; }
.ic-link { width: 22px; height: 22px; color: #6b7078; margin-right: 4px; }
.url-host { color: #5f646b; }
.ic-tb { width: 34px; height: 34px; margin-right: 18px; color: #5f646b; }
.webview { position: relative; flex: 1; overflow: hidden; background: #fcfcfc; padding-left: 16px; font-family: "Liberation Serif", serif; color: #000; }
.web-h1 { margin: 40px 0 0; font-size: 48px; line-height: 56px; font-weight: 700; }
.web-p { margin: 39px 0 0; font-size: 32px; line-height: 36px; }
.web-label { margin-top: 33px; }
.web-user { display: block; width: 1930px; height: 1930px; margin: 2px 0 0 2px; fill: none; stroke: #000; stroke-width: 1.500; }
.web-scroll { position: absolute; top: 16px; right: 5px; width: 18px; }
.web-scroll-up { display: block; width: 0; height: 0; border-left: 9px solid transparent; border-right: 9px solid transparent; border-bottom: 14px solid #8a8a8a; }
.web-scroll-thumb { display: block; width: 18px; height: 504px; margin-top: 16px; border-radius: 9px; background: #8a8a8a; }

.taskbar { height: 96px; flex: none; display: flex; background: #eeeeee; border-top: 3px solid #c2c2c2; font-family: "Open Sans", sans-serif; color: #1a1a1a; }
.tb-left { width: 737px; flex: none; padding: 11px 0 0 43px; }
.warn { position: relative; display: block; width: 42px; height: 54px; }
.warn-tri { position: absolute; left: 0; top: 19px; width: 42px; height: 36px; }
.warn-badge { position: absolute; left: 19px; top: 0; width: 32px; height: 32px; border-radius: 50%; background: #c42b1c; color: #fff; font-size: 20px; display: flex; align-items: center; justify-content: center; }
.tb-apps { display: flex; flex: none; }
.app { position: relative; width: 88px; height: 93px; padding-bottom: 3px; display: flex; align-items: center; justify-content: center; }
.app-i { width: 46px; height: 46px; display: block; }
.app-out { width: 58px; height: 62px; display: block; margin: -13px 0 0 8px; }
.has-run::after { content: ""; position: absolute; left: 38px; bottom: 11px; width: 12px; height: 5px; border-radius: 3px; background: #8c8c8c; }
.m365 { position: absolute; left: 33px; bottom: 21px; background: #000; color: #fff; font-size: 13px; line-height: 18px; padding: 0 2px; border-radius: 3px; font-weight: 600; }
.app-active::before { content: ""; position: absolute; left: 6px; top: 6px; right: 6px; bottom: 10px; background: #f6f6f6; border: 1px solid #e4e4e4; border-radius: 8px; }
.app-r { position: relative; width: 40px; height: 40px; }
.act-line { position: absolute; left: 28px; bottom: 11px; width: 32px; height: 5px; border-radius: 3px; background: #0f78d4; }
.tray { flex: 1; display: flex; align-items: center; min-width: 0; padding-bottom: 5px; }
.tray-up { width: 24px; height: 24px; margin-left: 213px; color: #222; stroke-width: 2; }
.tray-cloud { width: 32px; height: 20px; margin-left: 37px; }
.tray-lang { margin-left: 38px; font-size: 22.500px; }
.tray-ico { display: block; flex: none; }
.tray-wifi { width: 32px; height: 24px; margin-left: 37px; }
.tray-spk { width: 32px; height: 24px; margin-left: 16px; }
.tray-bat { width: 34px; height: 28px; margin-left: 16px; }
.clock { margin-left: auto; padding: 0 39px 3px 0; display: flex; flex-direction: column; align-items: flex-end; font-size: 23px; line-height: 32px; }
```
